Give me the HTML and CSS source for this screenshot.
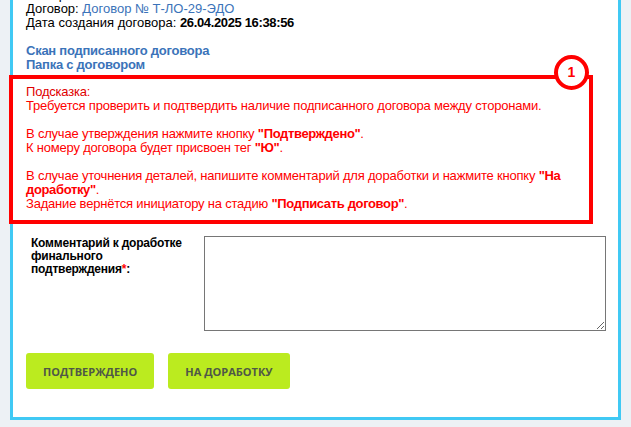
FILE: index.html
```html
<!DOCTYPE html>
<html lang="ru">
<head>
    <meta charset="UTF-8">
    <meta name="viewport" content="width=device-width, initial-scale=1.0">
    <title>Подтверждение договора</title>
    <link rel="stylesheet" href="styles.css">
</head>
<body>
    <div class="card">
        <!-- Contract info -->
        <div class="info">
            <div>Номер заявки: <b>4512</b></div>
            <div>Договор: <a href="#" class="link">Договор № Т-ЛО-29-ЭДО</a></div>
            <div>Дата создания договора: <b>26.04.2025 16:38:56</b></div>
        </div>

        <div class="files">
            <a href="#" class="file-link">Скан подписанного договора</a>
            <a href="#" class="file-link">Папка с договором</a>
        </div>

        <!-- Hint -->
        <div class="hint">
            <span class="hint-badge">1</span>
            <p><span class="hint-title">Подсказка</span>:<br>Требуется проверить и подтвердить наличие подписанного договора между сторонами.</p>
            <p>В случае утверждения нажмите кнопку <b>"Подтверждено"</b>.<br>К номеру договора будет присвоен тег <b>"Ю"</b>.</p>
            <p>В случае уточнения деталей, напишите комментарий для доработки и нажмите кнопку <b>"На доработку"</b>.<br>Задание вернётся инициатору на стадию <b>"Подписать договор"</b>.</p>
        </div>

        <!-- Comment -->
        <div class="comment-row">
            <label class="comment-label" for="comment">Комментарий к доработке финального подтверждения<span class="required">*</span>:</label>
            <textarea id="comment" class="comment-input"></textarea>
        </div>

        <!-- Actions -->
        <div class="actions">
            <button class="btn">Подтверждено</button>
            <button class="btn">На доработку</button>
        </div>
    </div>
</body>
</html>
```

FILE: styles.css
```css
body {
    margin: 0;
    padding: 0;
    background-color: #edf1f5;
    font-family: "Liberation Sans", Arial, sans-serif;
    font-size: 13px;
    line-height: 14px;
    color: #000;
}

b {
    letter-spacing: -0.35px;
}

.card {
    margin: -40px 10px 0 10px;
    padding: 25px 12px 28px 13px;
    background: #fff;
    border: 3px solid #40c9f4;
}

.link {
    color: #3b73b9;
    text-decoration: none;
}

.files {
    margin-top: 14px;
    display: flex;
    flex-direction: column;
}

.file-link {
    color: #3b73b9;
    font-weight: bold;
    letter-spacing: -0.25px;
    text-decoration: none;
}

/* Red hint box */
.hint {
    position: relative;
    margin: 3px 13px 0 -17px;
    padding: 6px 13px 9px 13px;
    border: 4px solid #ff0000;
    color: #ff0000;
    letter-spacing: -0.2px;
}

.hint p {
    margin: 14px 0 0 0;
}

.hint p:first-of-type {
    margin-top: 0;
}

.hint-title {
    color: #e00000;
}

.hint-badge {
    position: absolute;
    top: -24px;
    right: 0;
    width: 35px;
    height: 35px;
    box-sizing: border-box;
    border: 4px solid #ff0000;
    border-radius: 50%;
    background: #fff;
    color: #ff0000;
    font-weight: bold;
    font-size: 14px;
    line-height: 27px;
    text-align: center;
    letter-spacing: 0;
}

/* Comment field */
.comment-row {
    margin-top: 12px;
    display: flex;
    gap: 8px;
}

.comment-label {
    flex: none;
    width: 165px;
    padding: 1px 0 0 5px;
    font-size: 12px;
    font-weight: bold;
    line-height: 13px;
    letter-spacing: -0.2px;
}

.required {
    color: #ff0000;
}

.comment-input {
    flex: none;
    width: 402px;
    height: 95px;
    box-sizing: border-box;
    margin: 0;
    border: 1px solid #767676;
}

.actions {
    margin-top: 22px;
    display: flex;
    gap: 14px;
}

.btn {
    height: 36px;
    padding: 0 17px;
    background-color: #bbeb1f;
    color: #4f5847;
    border: none;
    border-radius: 3px;
    font-family: "Open Sans", sans-serif;
    font-size: 11px;
    font-weight: bold;
    text-transform: uppercase;
    cursor: pointer;
}
```
